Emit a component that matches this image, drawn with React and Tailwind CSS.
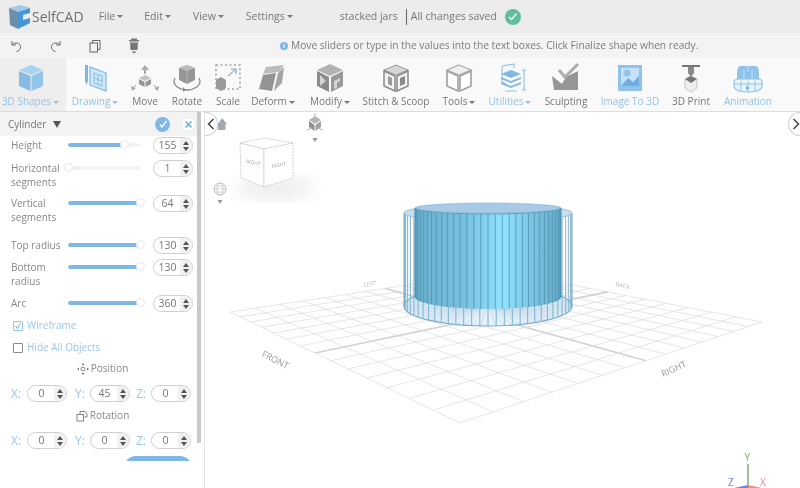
import React from "react";

const BL = "#8fc3ea";

function homography() {
  const [x0, y0] = [500, 271];
  const [x1, y1] = [762, 322];
  const [x2, y2] = [460, 423];
  const [x3, y3] = [230, 312];
  const dx1 = x1 - x2, dx2 = x3 - x2, sx = x0 - x1 + x2 - x3;
  const dy1 = y1 - y2, dy2 = y3 - y2, sy = y0 - y1 + y2 - y3;
  const d = dx1 * dy2 - dx2 * dy1;
  const g = (sx * dy2 - dx2 * sy) / d;
  const h = (dx1 * sy - sx * dy1) / d;
  const a = x1 - x0 + g * x1, b = x3 - x0 + h * x3, c = x0;
  const e = y1 - y0 + g * y1, f = y3 - y0 + h * y3, i = y0;
  return (u, v) => {
    const w = g * u + h * v + 1;
    return [(a * u + b * v + c) / w, (e * u + f * v + i) / w];
  };
}

function Grid() {
  const H = homography();
  const N = 14;
  const lines = [];
  for (let k = 0; k <= N; k++) {
    const t = k / N;
    const [a, b] = H(t, 0);
    const [c, d] = H(t, 1);
    const [e, f] = H(0, t);
    const [g, h] = H(1, t);
    const thick = k === 7;
    const common = { stroke: thick ? "#d2d2d2" : "#e0e0e0", strokeWidth: thick ? 1.6 : 0.8 };
    lines.push(<line key={"a" + k} x1={a} y1={b} x2={c} y2={d} {...common} />);
    lines.push(<line key={"b" + k} x1={e} y1={f} x2={g} y2={h} {...common} />);
  }
  return <g>{lines}</g>;
}

function Cylinder() {
  const cx = 488;
  const wire = [];
  const spokes = [];
  const solid = [];
  for (let i = 0; i < 64; i++) {
    const th = (i / 64) * Math.PI * 2;
    const s = Math.sin(th), co = Math.cos(th);
    const wx = cx + 84 * s;
    const front = co > -0.05;
    wire.push(
      <line key={i} x1={wx} y1={213 + 9 * co} x2={wx} y2={306 + 20 * co}
        stroke={front ? "#7aafcc" : "#9cc3d8"} strokeWidth={front ? 1.1 : 0.7} opacity={front ? 0.85 : 0.45} />
    );
    spokes.push(
      <line key={i} x1={cx} y1={306} x2={wx} y2={306 + 20 * co} stroke="#b4d2e5" strokeWidth="0.6" />
    );
    if (front) {
      const sx = cx + 73 * s;
      solid.push(
        <line key={i} x1={sx} y1={208 + 6 * co} x2={sx} y2={297 + 12 * co} stroke="#4f93b0" strokeWidth="1.1" opacity="0.75" />
      );
    }
  }
  return (
    <g>
      <defs>
        <linearGradient id="cyl" x1="0" x2="1" y1="0" y2="0">
          <stop offset="0" stopColor="#68afcd" />
          <stop offset="0.35" stopColor="#79c2df" />
          <stop offset="0.6" stopColor="#90e3ff" />
          <stop offset="0.8" stopColor="#7ac6e3" />
          <stop offset="1" stopColor="#66abc9" />
        </linearGradient>
      </defs>
      <ellipse cx={cx} cy="306" rx="84" ry="20" fill="#e6f1f9" />
      {spokes}
      <ellipse cx={cx} cy="213" rx="84" ry="9" fill="#c9e0f0" />
      {wire}
      <ellipse cx={cx} cy="306" rx="84" ry="20" fill="none" stroke="#7aafcc" strokeWidth="1.1" />
      <ellipse cx={cx} cy="213" rx="84" ry="9" fill="none" stroke="#92bcd4" strokeWidth="0.8" />
      <path d="M415 208 L415 297 A73 12 0 0 0 561 297 L561 208 A73 6 0 0 1 415 208 Z" fill="url(#cyl)" />
      {solid}
      <ellipse cx={cx} cy="208" rx="73" ry="5" fill="#a9cae6" stroke="#86b5d2" strokeWidth="0.7" />
      <path d="M415 208 A73 6 0 0 0 561 208" fill="none" stroke="#5f9fbd" strokeWidth="1" />
    </g>
  );
}

function Viewport() {
  return (
    <svg width="595" height="376" viewBox="205 112 595 376" className="block">
      <defs>
        <filter id="soft"><feGaussianBlur stdDeviation="9" /></filter>
      </defs>
      <Grid />
      <g fontFamily="'Open Sans', sans-serif" fontSize="8" fill="#aaa">
        <text transform="translate(261,356) rotate(27)" fontSize="9" fill="#999">FRONT</text>
        <text transform="translate(663,377) rotate(-24)" fontSize="9" fill="#999">RIGHT</text>
        <text transform="translate(364,287) rotate(-9)" fontSize="6" fill="#bbb">LEFT</text>
        <text transform="translate(615,286) rotate(12)" fontSize="6" fill="#bbb">BACK</text>
      </g>
      <Cylinder />
      <ellipse cx="275" cy="188" rx="40" ry="12" fill="#000" opacity="0.07" filter="url(#soft)" />
      <path d="M240 143 L264 138 L293 143 L264 149 Z" fill="#fff" stroke="#c4c4c4" strokeWidth="0.8" strokeDasharray="2 1" />
      <path d="M240 143 L264 149 L264 187 L241 178 Z" fill="#fdfdfd" stroke="#c4c4c4" strokeWidth="0.8" strokeDasharray="2 1" />
      <path d="M293 143 L264 149 L264 187 L293 178 Z" fill="#fff" stroke="#c4c4c4" strokeWidth="0.8" strokeDasharray="2 1" />
      <text transform="translate(246,163) rotate(10)" fontSize="5" fill="#aaa" fontFamily="'Open Sans', sans-serif">RIGHT</text>
      <text transform="translate(272,168) rotate(-10)" fontSize="5" fill="#aaa" fontFamily="'Open Sans', sans-serif">RIGHT</text>
      <path d="M222 118 L227 124 L225.5 124 L225.5 130 L218 130 L218 124 Z" fill="#a3a9ae" />
      <path d="M315 116 L321 120 L315 124 L309 120 Z" fill="#b5b5b5" />
      <path d="M309 121 L314.5 125 L314.5 131 L309 127 Z" fill="#8f8f8f" />
      <path d="M321 121 L315.5 125 L315.5 131 L321 127 Z" fill="#a0a0a0" />
      <path d="M307 130 L312 128 M323 130 L318 128 M315 116 L315 113" stroke="#b5b5b5" strokeWidth="1" />
      <path d="M312.5 138 L317.5 138 L315 142 Z" fill="#999" />
      <circle cx="220" cy="189" r="6" fill="#fff" stroke="#b5b5b5" strokeWidth="0.9" />
      <ellipse cx="220" cy="189" rx="3" ry="6" fill="none" stroke="#c0c0c0" strokeWidth="0.7" />
      <path d="M214 189 L226 189 M215 186 L225 186 M215 192 L225 192" stroke="#c0c0c0" strokeWidth="0.7" />
      <path d="M217.5 200 L222.5 200 L220 204 Z" fill="#999" />
      <path d="M748 464 L748 485" stroke="#7aa56f" strokeWidth="1.4" />
      <path d="M748 485 L734 488 L748 488 Z" fill="#6f7ff0" />
      <path d="M748 485 L762 488 L748 488 Z" fill="#ef8b8b" />
      <g fontFamily="'Open Sans', sans-serif" fontSize="10">
        <text x="744.5" y="461" fill="#7aa56f">Y</text>
        <text x="728" y="486" fill="#6f7ff0">Z</text>
        <text x="760" y="486" fill="#ef8b8b">X</text>
      </g>
    </svg>
  );
}

function Caret({ color = "#777" }) {
  return <span className="inline-block ml-[2px] align-middle w-0 h-0 border-x-[3px] border-x-transparent border-t-[3px]" style={{ borderTopColor: color }} />;
}

function I({ children }) {
  return <svg width="32" height="32" viewBox="0 0 32 32">{children}</svg>;
}

const icons = {
  shapes: (
    <I>
      <path d="M16 3 L28 8 L16 13 L4 8 Z" fill="#a9d3f3" />
      <path d="M4 9 L15.5 14 L15.5 29 L4 24 Z" fill="#86bbe4" />
      <path d="M28 9 L16.5 14 L16.5 29 L28 24 Z" fill="#93c5ea" />
    </I>
  ),
  drawing: (
    <I>
      <path d="M11 5 L27 11 L27 29 L11 23 Z" fill="#d5e8f7" stroke={BL} strokeWidth="1.4" />
      <path d="M15 11 L23 14 L23 24 L15 21 Z M19 12 L19 22 M15 16 L23 19" fill="none" stroke={BL} strokeWidth="1.2" />
      <path d="M6 3 L9 3 L9 19 L7.5 23 L6 19 Z" fill="#7fb6e0" />
    </I>
  ),
  move: (
    <I>
      <path d="M16 3 L20 8 L17 8 L17 12 L15 12 L15 8 L12 8 Z" fill="#aaa" />
      <path d="M16 13 L22 16 L16 19 L10 16 Z" fill="#c4c4c4" />
      <path d="M10 17 L15.5 20 L15.5 25 L10 22 Z M22 17 L16.5 20 L16.5 25 L22 22 Z" fill="#959595" />
      <path d="M2 24 L3 29 L7 26 Z M30 24 L29 29 L25 26 Z" fill="#aaa" />
      <path d="M4 26 L7 23 M28 26 L25 23" stroke="#aaa" strokeWidth="1" />
    </I>
  ),
  rotate: (
    <I>
      <path d="M8 6 L16 3 L24 6 L24 18 L16 22 L8 18 Z" fill="#969696" />
      <path d="M8 6 L16 3 L24 6 L16 9 Z" fill="#bdbdbd" />
      <path d="M16 9 L16 22" stroke="#bbb" strokeWidth="0.8" />
      <path d="M4 16 C0 24 10 28 16 28 C22 28 32 24 28 16" fill="none" stroke="#8a8a8a" strokeWidth="1.3" />
      <path d="M12 25 L15 28 L12 30 Z" fill="#8a8a8a" />
    </I>
  ),
  scale: (
    <I>
      <rect x="4" y="3" width="24" height="24" fill="none" stroke="#a5a5a5" strokeWidth="1.6" strokeDasharray="2 2.5" />
      <path d="M4 18 L9 15 L14 18 L14 26 L9 29 L4 26 Z" fill="#999" />
      <path d="M16 14 L24 7 M19 7 L24 7 L24 12" fill="none" stroke="#a9bccb" strokeWidth="1.6" />
    </I>
  ),
  deform: (
    <I>
      <path d="M9 5 L27 3 L22 10 L6 12 Z" fill="#bcbcbc" />
      <path d="M6 13 L19 11 L15 29 L2 27 Z" fill="#949494" />
      <path d="M21 11 L27 5 L25 21 L17 29 Z" fill="#a5a5a5" />
    </I>
  ),
  modify: (
    <I>
      <path d="M16 2 L29 8 L16 14 L3 8 Z" fill="#b2b2b2" />
      <path d="M3 9 L15 15 L15 30 L3 24 Z" fill="#8c8c8c" />
      <path d="M29 9 L17 15 L17 30 L29 24 Z" fill="#999" />
      <path d="M6 13 L12 19 L6 24 Z" fill="#d4d4d4" />
      <path d="M20 19 L26 16 L26 19 L23 21 L23 26 L20 27 Z" fill="#d4d4d4" />
    </I>
  ),
  stitch: (
    <I>
      <path d="M16 3 L28 8 L16 13 L4 8 Z" fill="#d6d6d6" stroke="#999" strokeWidth="1" />
      <path d="M4 9 L15 14 L15 29 L4 24 Z M28 9 L17 14 L17 29 L28 24 Z" fill="#f3f3f3" stroke="#8a8a8a" strokeWidth="1.5" />
      <path d="M8 14 L12 16 L12 24 L8 22 Z" fill="#999" />
      <path d="M20 16 L25 14 L25 22 L20 24 Z" fill="#8a8a8a" />
    </I>
  ),
  tools: (
    <I>
      <path d="M16 3 L28 8 L16 13 L4 8 Z" fill="#efefef" stroke="#adadad" strokeWidth="1.3" />
      <path d="M4 9 L15 14 L15 29 L4 24 Z M28 9 L17 14 L17 29 L28 24 Z" fill="#fff" stroke="#a0a0a0" strokeWidth="1.6" />
    </I>
  ),
  utilities: (
    <I>
      <path d="M8 4 L20 2 L20 6 M8 4 L8 20 L12 22" fill="none" stroke={BL} strokeWidth="1.2" />
      <path d="M17 8 L27 12 L17 16 L7 12 Z M7 15 L17 19 L27 15 L27 17 L17 21 L7 17 Z M7 20 L17 24 L27 20 L27 22 L17 26 L7 22 Z" fill="#7fb8e6" />
      <path d="M30 8 L30 28 M28 8 L32 8 M28 28 L32 28 M11 29 L23 29" stroke={BL} strokeWidth="1.2" />
    </I>
  ),
  sculpting: (
    <I>
      <path d="M2 14 L12 22 L16 15 L28 9 L28 28 L4 28 Z" fill="#959595" />
      <path d="M9 8 L15 15 L28 2" fill="none" stroke="#adadad" strokeWidth="3" />
    </I>
  ),
  image: (
    <I>
      <rect x="4" y="3" width="24" height="26" fill="#8fc3ea" />
      <rect x="7" y="6" width="18" height="18" fill="#c7e1f6" />
      <circle cx="13" cy="11" r="3.5" fill="#8fc3ea" />
      <path d="M7 24 L14 16 L19 20 L25 14 L25 24 Z" fill="#6fb0e2" />
    </I>
  ),
  print: (
    <I>
      <path d="M7 3 L25 3 L25 5 L7 5 Z" fill="#777" />
      <path d="M13 5 L19 5 L19 11 L16 15 L13 11 Z" fill="#888" />
      <path d="M10 17 L16 14 L22 17 L22 26 L16 30 L10 26 Z" fill="#eee" stroke="#bbb" strokeWidth="0.8" />
      <path d="M10 17 L16 21 L22 17 L16 14 Z" fill="#777" />
    </I>
  ),
  animation: (
    <I>
      <path d="M9 4 L23 4 C27 4 27 8 27 18 L5 18 C5 8 5 4 9 4 Z" fill="#8fc3ea" />
      <path d="M12 8 L12 18 M20 8 L20 18 M16 4 L16 10" stroke="#c9e2f6" strokeWidth="1" />
      <path d="M2 20 C2 18 5 17 6 17 L26 17 C28 17 30 18 30 20 L30 25 C28 29 24 30 16 30 C8 30 4 29 2 25 Z" fill="#eaf4fb" stroke={BL} strokeWidth="1.2" />
      <path d="M9 19 L9 29 M16 19 L16 30 M23 19 L23 29 M2 22 L30 22" stroke={BL} strokeWidth="1" />
      <path d="M14 24 L18 26 L14 28 Z" fill="#6fb0e2" />
    </I>
  ),
};

const tools = [
  ["shapes", "3D Shapes", 66, true, true, true],
  ["drawing", "Drawing", 58, true, true],
  ["move", "Move", 42],
  ["rotate", "Rotate", 42],
  ["scale", "Scale", 40],
  ["deform", "Deform", 50, false, true],
  ["modify", "Modify", 64, false, true],
  ["stitch", "Stitch & Scoop", 68],
  ["tools", "Tools", 58, false, true],
  ["utilities", "Utilities", 44, true, true],
  ["sculpting", "Sculpting", 68],
  ["image", "Image To 3D", 60, true],
  ["print", "3D Print", 62],
  ["animation", "Animation", 52, true],
];

function Tool({ t }) {
  const [icon, label, w, blue, caret, active] = t;
  return (
    <div
      className={`flex flex-col items-center shrink-0 h-[53px] pt-[4px] whitespace-nowrap ${active ? "bg-[#eeeeee] pr-[5px]" : ""}`}
      style={{ width: w }}
    >
      <div className="h-[32px] w-[32px]">{icons[icon]}</div>
      <div className={`text-[10px] leading-[14px] ${blue ? "text-[#8fc3ea]" : "text-[#777777]"}`}>
        {label}
        {caret && <Caret color={blue ? BL : "#777"} />}
      </div>
    </div>
  );
}

function Spin({ value, w = "w-[40px]" }) {
  return (
    <div className={`${w} h-[17px] shrink-0 rounded-full border border-[#cfcfcf] bg-white flex overflow-hidden`}>
      <div className="flex-1 text-center text-[#777777] text-[10.5px] leading-[15px] pl-[1px]">{value}</div>
      <div className="w-[12px] bg-[#f1f1f1] flex flex-col items-center justify-center gap-[2px]">
        <span className="w-0 h-0 border-x-[3px] border-x-transparent border-b-[4px] border-b-[#555555]" />
        <span className="w-0 h-0 border-x-[3px] border-x-transparent border-t-[4px] border-t-[#555555]" />
      </div>
    </div>
  );
}

function Row({ h, label, pct, value }) {
  return (
    <div className="flex items-start pl-[11px]" style={{ height: h }}>
      <div className="w-[55px] text-[10px] leading-[14px] text-[#888888] pt-[1px] mr-[2px] shrink-0">{label}</div>
      <div className="w-[72px] h-[16px] flex items-center shrink-0 relative">
        <div className="w-full h-[4px] rounded-full bg-[#f3f3f3] overflow-hidden">
          <div className="h-full bg-[#7fb8e4] rounded-full" style={{ width: `${pct}%` }} />
        </div>
        <div
          className="absolute top-[3px] w-[9px] h-[9px] rounded-full bg-white border border-[#e6e6e6]"
          style={{ left: `calc(${pct}% - 4px)` }}
        />
      </div>
      <div className="ml-[13px]"><Spin value={value} /></div>
    </div>
  );
}

function Xyz({ vals }) {
  const names = ["X:", "Y:", "Z:"];
  return (
    <div className="flex items-center pl-[11px] h-[17px]">
      {vals.map((v, i) => (
        <React.Fragment key={i}>
          <div className={`text-[12px] text-[#9ac7ec] shrink-0 ${i === 0 ? "w-[16px]" : i === 1 ? "w-[15px] ml-[8px]" : "w-[15px] ml-[6px]"}`}>{names[i]}</div>
          <Spin value={v} />
        </React.Fragment>
      ))}
    </div>
  );
}

function Panel() {
  return (
    <div className="w-[205px] h-full shrink-0 bg-white border-r border-[#e3e3e3] flex">
      <div className="w-[197px] shrink-0 h-[349px] overflow-hidden">
        <div className="h-[24px] bg-[#f3f3f3] flex items-center pl-[8px]">
          <span className="text-[10px] text-[#777777]">Cylinder</span>
          <span className="ml-[7px] w-0 h-0 border-x-[4px] border-x-transparent border-t-[7px] border-t-[#555555]" />
          <span className="ml-auto w-[15px] h-[15px] rounded-full bg-[#7fb8e4] flex items-center justify-center">
            <svg width="10" height="10" viewBox="0 0 10 10"><path d="M2 5.5 L4 8 L8.5 2" fill="none" stroke="#fff" strokeWidth="1.3" /></svg>
          </span>
          <span className="ml-[11px] mr-[1px] w-[15px] h-[15px] rounded-full bg-white border border-[#dcebf7] flex items-center justify-center">
            <svg width="9" height="9" viewBox="0 0 9 9"><path d="M1.5 1.5 L7.5 7.5 M7.5 1.5 L1.5 7.5" stroke="#6fb0e2" strokeWidth="1.6" /></svg>
          </span>
        </div>
        <div className="pt-[1px]">
          <Row h={23} label="Height" pct={78} value="155" />
          <Row h={35} label="Horizontal segments" pct={0} value="1" />
          <Row h={42} label="Vertical segments" pct={100} value="64" />
          <Row h={22} label="Top radius" pct={100} value="130" />
          <Row h={36} label="Bottom radius" pct={100} value="130" />
          <Row h={22} label="Arc" pct={100} value="360" />
        </div>
        <div className="flex items-center pl-[13px] h-[15px] mt-[1px]">
          <span className="w-[10px] h-[10px] border border-[#8fc3ea] bg-white rounded-[1px] flex items-center justify-center">
            <svg width="8" height="8" viewBox="0 0 8 8"><path d="M1.5 4 L3.3 6.5 L6.5 1" fill="none" stroke="#6fb0e2" strokeWidth="1" /></svg>
          </span>
          <span className="ml-[4px] text-[10px] text-[#9ac7ec]">Wireframe</span>
        </div>
        <div className="flex items-center pl-[13px] h-[15px] mt-[7px]">
          <span className="w-[10px] h-[10px] border border-[#888888] bg-white rounded-[1px]" />
          <span className="ml-[4px] text-[10px] text-[#9ac7ec]">Hide All Objects</span>
        </div>
        <div className="h-[15px] mt-[6px] flex items-center justify-center pl-[8px] text-[10px] text-[#888888]">
          <svg width="12" height="12" viewBox="0 0 12 12" className="mr-[2px]"><circle cx="6" cy="6" r="2" fill="none" stroke="#777" strokeWidth="0.9" /><path d="M6 0 L7.5 2 L4.5 2 Z M6 12 L7.5 10 L4.5 10 Z M0 6 L2 4.5 L2 7.5 Z M12 6 L10 4.5 L10 7.5 Z" fill="#777" /></svg>
          Position
        </div>
        <div className="mt-[9px]"><Xyz vals={["0", "45", "0"]} /></div>
        <div className="h-[15px] mt-[6px] flex items-center justify-center pl-[8px] text-[10px] text-[#888888]">
          <svg width="12" height="12" viewBox="0 0 12 12" className="mr-[2px]"><rect x="1" y="4.5" width="6.5" height="6.5" fill="none" stroke="#777" strokeWidth="0.9" /><path d="M4 4 L4 1.5 L9 1.5 L11 4 L11 7 L8.5 7" fill="none" stroke="#777" strokeWidth="0.9" /></svg>
          Rotation
        </div>
        <div className="mt-[9px]"><Xyz vals={["0", "0", "0"]} /></div>
        <div className="ml-[124px] mt-[7px] w-[68px] h-[12px] rounded-t-full bg-[#7fb8e4]" />
      </div>
      <div className="w-[4px] h-[331px] bg-[#c9c9c9]" />
    </div>
  );
}

export default function App() {
  return (
    <div className="w-[800px] h-[488px] relative overflow-hidden bg-white flex flex-col blur-[0.35px]" style={{ fontFamily: "'Open Sans', sans-serif" }}>
      <div className="h-[33px] bg-[#ececec] flex items-center shrink-0 text-[#777777] text-[10.5px] whitespace-nowrap">
        <svg width="24" height="24" viewBox="0 0 24 24" className="ml-[7px]">
          <path d="M2 3 L14 0 L23 3 L11 7 Z" fill="#9fc9e6" />
          <path d="M2 3 L11 7 L11 24 L3 20 Z" fill="#6d8ea8" />
          <path d="M11 7 L23 3 L23 8 L16 10 L16 15 L23 13 L23 18 L11 24 Z" fill="#4596d6" />
        </svg>
        <span className="ml-[1px] text-[14px] text-[#6f6f6f]">SelfCAD</span>
        <span className="ml-[15px]">File<Caret /></span>
        <span className="ml-[21px]">Edit<Caret /></span>
        <span className="ml-[22px]">View<Caret /></span>
        <span className="ml-[22px]">Settings<Caret /></span>
        <span className="ml-[47px]">stacked jars</span>
        <span className="ml-[8px] w-[1px] h-[16px] bg-[#666666]" />
        <span className="ml-[4px]">All changes saved</span>
        <span className="ml-[8px] w-[16px] h-[16px] rounded-full bg-[#5fbf9b] flex items-center justify-center">
          <svg width="11" height="11" viewBox="0 0 11 11"><path d="M2 6 L4.5 8.5 L9.5 2.5" fill="none" stroke="#fff" strokeWidth="1.4" /></svg>
        </span>
      </div>
      <div className="h-[25px] bg-[#f3f3f3] flex items-center shrink-0 text-[#7c7c7c] text-[10.2px] whitespace-nowrap">
        <svg width="14" height="14" viewBox="0 0 14 14" className="ml-[9px]"><path d="M3 2 L3 6 L7 6 M3.5 5.5 C6 3 11 3.5 11.5 7.5 C11.8 10 10 12 7.5 12.5" fill="none" stroke="#666" strokeWidth="1" /></svg>
        <svg width="14" height="14" viewBox="0 0 14 14" className="ml-[26px]"><path d="M11 2 L11 6 L7 6 M10.5 5.5 C8 3 3 3.5 2.5 7.5 C2.2 10 4 12 6.5 12.5" fill="none" stroke="#666" strokeWidth="1" /></svg>
        <svg width="14" height="14" viewBox="0 0 14 14" className="ml-[25px]"><rect x="2" y="4" width="7.5" height="9" fill="none" stroke="#666" strokeWidth="1" /><path d="M4.5 4 L4.5 1.5 L12 1.5 L12 10.5 L9.5 10.5" fill="none" stroke="#666" strokeWidth="1" /></svg>
        <svg width="12" height="16" viewBox="0 0 12 16" className="ml-[26px]"><path d="M3 0.5 L9 0.5 L9 2 L11 2 L11 3.5 L1 3.5 L1 2 L3 2 Z M2 4.5 L10 4.5 L9.5 12 L2.5 12 Z" fill="#777" /><path d="M3.5 13.5 L8.5 13.5 L6 15.5 Z" fill="#666" /></svg>
        <span className="ml-[140px] w-[8px] h-[8px] rounded-full bg-[#7fb8e4] text-white text-[6px] leading-[8px] text-center font-bold">i</span>
        <span className="ml-[3px]">Move sliders or type in the values into the text boxes. Click Finalize shape when ready.</span>
      </div>
      <div className="h-[53px] bg-[#f9f9f9] border-b border-[#dddddd] flex shrink-0 box-content">
        {tools.map((t) => <Tool key={t[1]} t={t} />)}
      </div>
      <div className="flex-1 flex min-h-0">
        <Panel />
        <div className="flex-1 min-w-0 overflow-hidden"><Viewport /></div>
      </div>
      <div className="absolute left-[205px] top-[112px] w-[13px] h-[24px] rounded-r-full border border-l-0 border-[#cfcfcf] bg-white flex items-center justify-end pr-[2px]">
        <svg width="8" height="12" viewBox="0 0 8 12"><path d="M6.5 1 L1.5 6 L6.5 11" fill="none" stroke="#444" strokeWidth="1.5" /></svg>
      </div>
      <div className="absolute left-[788px] top-[112px] w-[12px] h-[24px] rounded-l-full border border-r-0 border-[#cfcfcf] bg-white flex items-center pl-[3px]">
        <svg width="8" height="12" viewBox="0 0 8 12"><path d="M1.5 1 L6.5 6 L1.5 11" fill="none" stroke="#444" strokeWidth="1.5" /></svg>
      </div>
    </div>
  );
}
